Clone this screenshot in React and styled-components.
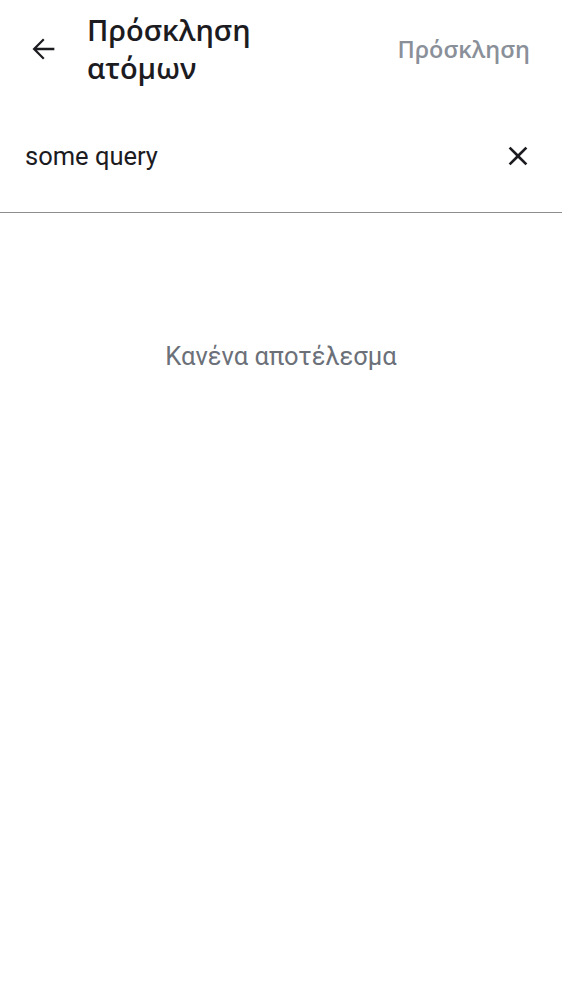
import React from "react";
import styled, { createGlobalStyle } from "styled-components";

const Global = createGlobalStyle`
  html, body { margin: 0; padding: 0; background: #ffffff; }
  body { font-family: Roboto, "Noto Sans", sans-serif; }
`;

const Page = styled.div`
  width: 562px;
  min-height: 1000px;
  background: #fff;
  display: flex;
  flex-direction: column;
`;

const Header = styled.header`
  display: flex;
  align-items: center;
  padding: 11px 32px 15px 23px;
  gap: 24px;
`;

const IconButton = styled.button`
  border: none;
  background: none;
  padding: 0;
  width: 40px;
  height: 40px;
  display: flex;
  align-items: center;
  justify-content: center;
  color: #1c1b1f;
  cursor: pointer;
`;

const Title = styled.h1`
  flex: 1;
  margin: 0;
  font-family: "Open Sans", sans-serif;
  font-weight: 600;
  font-size: 29px;
  line-height: 38px;
  color: #1c1b1f;
  max-width: 200px;
`;

const Action = styled.button`
  margin-left: auto;
  border: none;
  background: none;
  padding: 0;
  font-family: "Open Sans", sans-serif;
  font-weight: 600;
  font-size: 23.5px;
  color: #8a9099;
`;

const SearchRow = styled.div`
  display: flex;
  align-items: center;
  padding: 0 24px 0 25px;
  height: 90px;
  border-bottom: 1.5px solid #8e8e8e;
  margin-top: 20px;
`;

const Query = styled.div`
  flex: 1;
  font-size: 25.5px;
  color: #1c1b1f;
  padding-bottom: 22px;
`;

const ClearButton = styled(IconButton)`
  margin-bottom: 22px;
`;

const Empty = styled.div`
  text-align: center;
  margin-top: 128px;
  font-size: 25.5px;
  color: #6b7079;
`;

export default function App() {
  return (
    <Page>
      <Global />
      <Header>
        <IconButton aria-label="back">
          <svg width="34" height="34" viewBox="0 0 24 24">
            <path d="M20 11.1H7.7l5.4-5.4L12 4.6 4.6 12l7.4 7.4 1.1-1.1-5.4-5.4H20z" fill="currentColor" />
          </svg>
        </IconButton>
        <Title>Πρόσκληση ατόμων</Title>
        <Action>Πρόσκληση</Action>
      </Header>
      <SearchRow>
        <Query>some query</Query>
        <ClearButton aria-label="clear">
          <svg width="32" height="32" viewBox="0 0 24 24">
            <path d="M19 6.41L17.59 5 12 10.59 6.41 5 5 6.41 10.59 12 5 17.59 6.41 19 12 13.41 17.59 19 19 17.59 13.41 12z" fill="currentColor" />
          </svg>
        </ClearButton>
      </SearchRow>
      <Empty>Κανένα αποτέλεσμα</Empty>
    </Page>
  );
}
